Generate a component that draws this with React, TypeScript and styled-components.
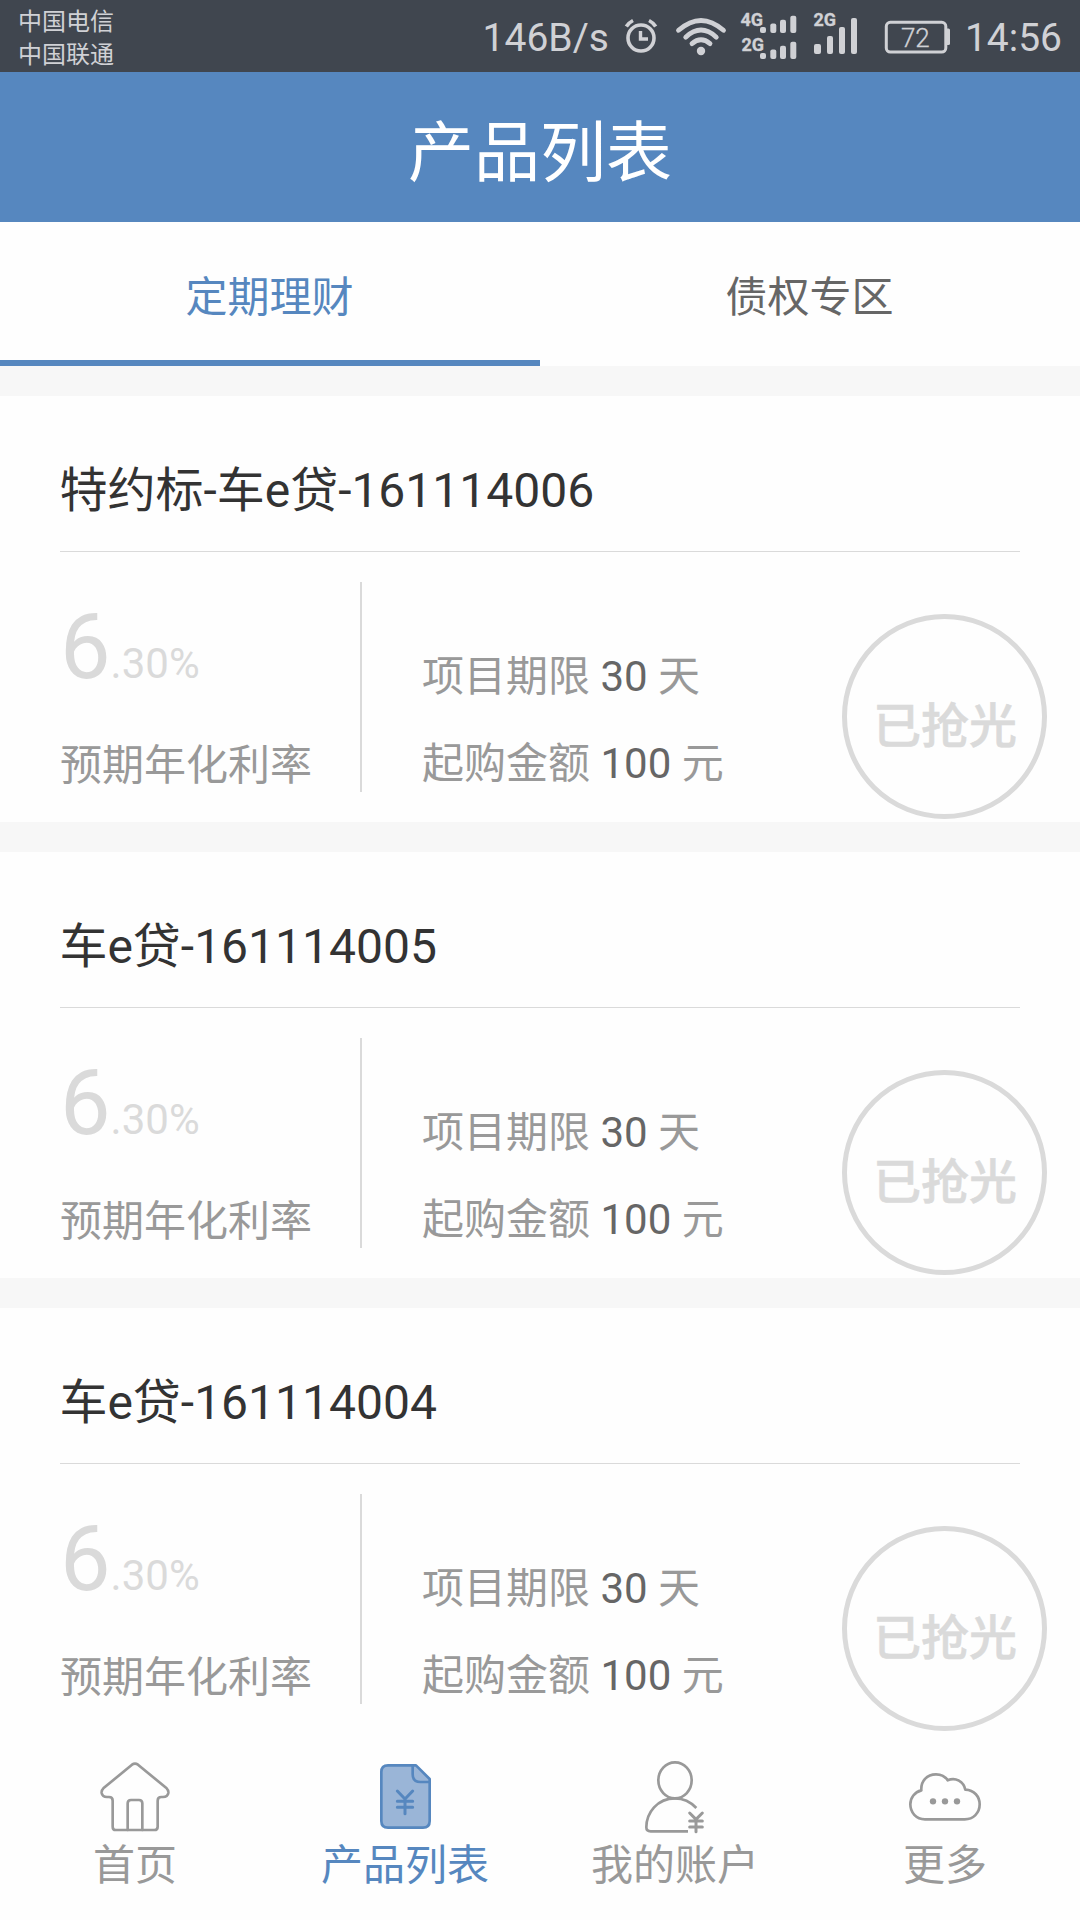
import React from "react";
import styled, { createGlobalStyle } from "styled-components";

const BLUE = "#5687bf";
const GREY = "#999999";
const PALE = "#dadada";
const STATUS_FG = "#d0d1d5";

const GlobalStyle = createGlobalStyle`
  html, body { margin: 0; padding: 0; background: #f7f7f7; }
  *, *::before, *::after { box-sizing: border-box; }
`;

const Page = styled.div`
  display: flex;
  flex-direction: column;
  width: 1080px;
  height: 1920px;
  overflow: hidden;
  background: #f7f7f7;
  font-family: Roboto, "Noto Sans CJK SC", sans-serif;
  font-size: 42px;
  color: ${GREY};
`;

const StatusBar = styled.div`
  display: flex;
  justify-content: space-between;
  align-items: center;
  height: 72px;
  flex: none;
  padding: 0 18px;
  background: #40464f;
  color: ${STATUS_FG};
`;

const Carriers = styled.div`
  display: flex;
  flex-direction: column;
  font-size: 24px;
  line-height: 33px;
  padding-top: 5px;
`;

const StatusRight = styled.div`
  display: flex;
  align-items: center;
  height: 72px;
`;

const StatusText = styled.span`
  font-size: 39px;
  line-height: 72px;
  padding-top: 3px;
`;

const StatusIcon = styled.svg<{ $gap: number }>`
  display: block;
  flex: none;
  height: 72px;
  margin-left: ${(p) => p.$gap}px;
  fill: ${STATUS_FG};
`;

const Header = styled.header`
  display: flex;
  align-items: center;
  justify-content: center;
  height: 150px;
  flex: none;
  padding-top: 13px;
  background: ${BLUE};
  color: #fff;
  font-size: 66px;
  line-height: 90px;
`;

const Tabs = styled.div`
  display: flex;
  height: 144px;
  flex: none;
  background: #fefefe;
`;

const Tab = styled.div<{ $active?: boolean }>`
  flex: 1;
  display: flex;
  align-items: center;
  justify-content: center;
  padding: 5px 1px 0 0;
  border-bottom: 6px solid ${(p) => (p.$active ? BLUE : "transparent")};
  color: ${(p) => (p.$active ? BLUE : "#666666")};
`;

const List = styled.main`
  display: flex;
  flex-direction: column;
  gap: 30px;
  padding-top: 30px;
  flex: none;
`;

const Card = styled.section`
  height: 426px;
  padding: 0 60px;
  background: #fefefe;
`;

const CardTitle = styled.h2`
  margin: 0;
  height: 156px;
  padding-top: 34px;
  border-bottom: 1px solid ${PALE};
  font-size: 48px;
  font-weight: 400;
  line-height: 122px;
  text-indent: -0.6px;
  color: #333333;
`;

const CardBody = styled.div`
  display: flex;
  height: 270px;
  padding: 30px 0;
  margin-right: -27px;
`;

const RateColumn = styled.div`
  display: flex;
  flex-direction: column;
  width: 302px;
  border-right: 2px solid ${PALE};
`;

const Rate = styled.div`
  flex: none;
  height: 150px;
  padding-top: 13px;
  line-height: 106px;
  color: ${PALE};
`;

const RateWhole = styled.span`
  font-size: 90px;
`;

const Line = styled.div`
  height: 87px;
  line-height: 87px;
  white-space: pre;
`;

const RateLabel = styled.div`
  flex: none;
  height: 60px;
  line-height: 67px;
`;

const Details = styled.div`
  flex: 1;
  padding: 51px 0 0 60px;
`;

const Value = styled.span`
  color: #666666;
`;

const Stamp = styled.div`
  display: flex;
  align-items: center;
  justify-content: center;
  flex: none;
  width: 205px;
  height: 205px;
  margin-top: 32px;
  padding: 10px 0 0 1px;
  border: 5px solid ${PALE};
  border-radius: 50%;
  color: ${PALE};
  font-size: 48px;
  font-weight: 500;
  -webkit-text-stroke: 0.6px ${PALE};
`;

const Nav = styled.nav`
  display: flex;
  height: 186px;
  flex: none;
  background: #fefefe;
`;

const NavItem = styled.div<{ $active?: boolean }>`
  flex: 1;
  display: flex;
  flex-direction: column;
  align-items: center;
  padding-top: 26px;
  color: ${(p) => (p.$active ? BLUE : GREY)};
`;

const NavIcon = styled.svg`
  display: block;
  width: 72px;
  height: 74px;
  overflow: visible;
  fill: none;
  stroke: currentColor;
  stroke-width: 8;
  stroke-linejoin: round;
  stroke-linecap: round;
`;

const NavLabel = styled.span`
  line-height: 64px;
`;

const products = [
  { name: "特约标-车e贷-161114006", whole: "6", rest: ".30%", days: 30, amount: 100 },
  { name: "车e贷-161114005", whole: "6", rest: ".30%", days: 30, amount: 100 },
  { name: "车e贷-161114004", whole: "6", rest: ".30%", days: 30, amount: 100 },
];

const stroke = { fill: "none", stroke: STATUS_FG, strokeLinecap: "round" as const };

const AlarmIcon = () => (
  <StatusIcon $gap={0} width={34} viewBox="624 0 34 72">
    <circle cx="641" cy="38" r="13" {...stroke} strokeWidth="3.6" />
    <path d="M640.5 31V39H648" {...stroke} strokeWidth="3.4" strokeLinecap="butt" />
    <path d="M626.3 26.500Q628.500 22.800 633 20.500M655.700 26.500Q653.500 22.800 649 20.500" {...stroke} strokeWidth="3.6" strokeLinecap="butt" />
  </StatusIcon>
);

const WifiIcon = () => (
  <StatusIcon $gap={17} width={52} viewBox="675 0 52 72">
    <g {...stroke} strokeWidth="4.8">
      <path d="M678.500 30.300Q701 10.500 723.500 30.300" />
      <path d="M685.700 37.200Q701 23 716.300 37.200" />
      <path d="M692 43.600Q701 36 710 43.600" />
    </g>
    <circle cx="701" cy="51" r="4.2" />
  </StatusIcon>
);

const networkLabel = { fontSize: 18, fontWeight: 700, stroke: STATUS_FG, strokeWidth: 0.3 };

const DualSignalIcon = () => (
  <StatusIcon $gap={12} width={59} viewBox="739 0 59 72">
    <text x="740.500" y="26" {...networkLabel}>4G</text>
    <text x="741.500" y="50.800" {...networkLabel}>2G</text>
    {[0, 26].map((dy) => (
      <g key={dy}>
        <rect x="760" y={27 + dy} width="6" height="6" rx="2" />
        <rect x="770.300" y={23.5 + dy} width="6" height="9.500" rx="2" />
        <rect x="780" y={19.7 + dy} width="6" height="13.300" rx="2" />
        <rect x="790.300" y={15.8 + dy} width="6" height="17.200" rx="2" />
      </g>
    ))}
  </StatusIcon>
);

const SignalIcon = () => (
  <StatusIcon $gap={15} width={46} viewBox="813 0 46 72">
    <text x="813.500" y="26" {...networkLabel}>2G</text>
    <rect x="814" y="44" width="7" height="10" rx="2" />
    <rect x="827" y="36" width="6" height="18" rx="2" />
    <rect x="839" y="27" width="6" height="27" rx="2" />
    <rect x="851" y="18" width="6" height="36" rx="2" />
  </StatusIcon>
);

const BatteryIcon = () => (
  <StatusIcon $gap={25} width={67} viewBox="884 0 67 72">
    <rect x="886.300" y="22.300" width="59.500" height="29.700" rx="4" {...stroke} strokeWidth="3" />
    <path d="M947 28.500H948.500Q950 28.500 950 30V43.500Q950 45 948.500 45H947Z" />
    <text x="915.300" y="46.500" fontSize="26" fontWeight="300" stroke={STATUS_FG} strokeWidth="0.3" textAnchor="middle">72</text>
  </StatusIcon>
);

const HomeIcon = () => (
  <NavIcon viewBox="117 60 216 222">
    <path d="M216 74Q225 68 234 74L320 145Q326 151 325 159Q323 171 309 171H304Q293 171 293 182V260Q293 270 283 270H167Q158 270 158 260V182Q158 171 147 171H141Q127 171 125 159Q124 151 130 145Z" />
    <path d="M203 270V190Q203 180 213 180H237Q247 180 247 190V270" />
  </NavIcon>
);

const ProductIcon = () => (
  <NavIcon viewBox="927 60 216 222">
    <path d="M984 76H1068L1109 117V243Q1109 263 1089 263H984Q964 263 964 243V96Q964 76 984 76Z" fill="#9ab5d7" />
    <path d="M1058 78V103Q1058 126 1081 126H1107" />
    <path d="M1012 153L1035 177L1058 153M1035 177V221M1012 184H1058M1012 202H1058" strokeWidth="9" />
  </NavIcon>
);

const AccountIcon = () => (
  <NavIcon viewBox="237 60 216 222">
    <ellipse cx="345" cy="121" rx="50" ry="54" />
    <path d="M409 204Q382 175 345 175C292 175 259 218 259 262Q259 274 272 274H384" strokeLinecap="butt" />
    <path d="M389 219L408 238L427 219M408 238V275M389 243H427M389 261H427" strokeWidth="9" />
  </NavIcon>
);

const MoreIcon = () => (
  <NavIcon viewBox="1047 60 216 222">
    <path d="M1095 238C1068 238 1051 217 1051 193C1051 173 1064 156 1084 151C1082 123 1101 103 1128 103C1143 103 1156 110 1163 121C1187 110 1211 125 1216 149C1243 150 1259 170 1259 193C1259 219 1240 238 1214 238Z" />
    <g fill="currentColor" stroke="none">
      <circle cx="1119" cy="184" r="9.500" />
      <circle cx="1155" cy="184" r="9.500" />
      <circle cx="1191" cy="184" r="9.500" />
    </g>
  </NavIcon>
);

const navItems = [
  { label: "首页", Icon: HomeIcon, active: false },
  { label: "产品列表", Icon: ProductIcon, active: true },
  { label: "我的账户", Icon: AccountIcon, active: false },
  { label: "更多", Icon: MoreIcon, active: false },
];

const SpeedText = styled(StatusText)`
  margin-right: 15px;
`;

const ClockText = styled(StatusText)`
  margin-left: 14px;
`;

export default function App() {
  return (
    <Page lang="zh-CN">
      <GlobalStyle />
      <StatusBar>
        <Carriers>
          <span>中国电信</span>
          <span>中国联通</span>
        </Carriers>
        <StatusRight>
          <SpeedText>146B/s</SpeedText>
          <AlarmIcon />
          <WifiIcon />
          <DualSignalIcon />
          <SignalIcon />
          <BatteryIcon />
          <ClockText>14:56</ClockText>
        </StatusRight>
      </StatusBar>
      <Header>产品列表</Header>
      <Tabs>
        <Tab $active>定期理财</Tab>
        <Tab>债权专区</Tab>
      </Tabs>
      <List>
        {products.map((p) => (
          <Card key={p.name}>
            <CardTitle>{p.name}</CardTitle>
            <CardBody>
              <RateColumn>
                <Rate>
                  <RateWhole>{p.whole}</RateWhole>
                  {p.rest}
                </Rate>
                <RateLabel>预期年化利率</RateLabel>
              </RateColumn>
              <Details>
                <Line>项目期限 <Value>{p.days}</Value> 天</Line>
                <Line>起购金额 <Value>{p.amount}</Value> 元</Line>
              </Details>
              <Stamp>已抢光</Stamp>
            </CardBody>
          </Card>
        ))}
      </List>
      <Nav>
        {navItems.map(({ label, Icon, active }) => (
          <NavItem key={label} $active={active}>
            <Icon />
            <NavLabel>{label}</NavLabel>
          </NavItem>
        ))}
      </Nav>
    </Page>
  );
}
